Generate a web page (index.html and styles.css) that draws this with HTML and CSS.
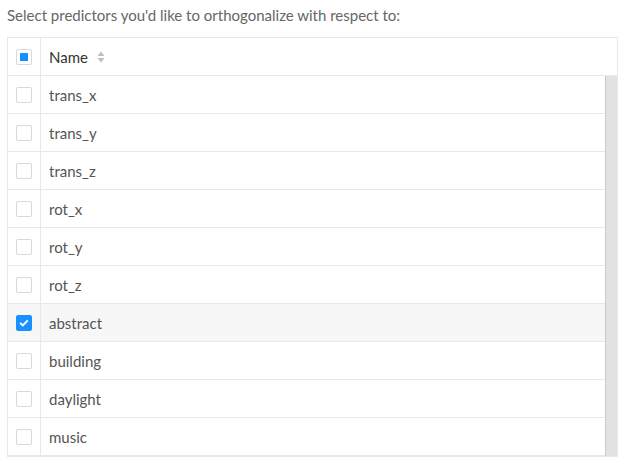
FILE: index.html
```html
<!DOCTYPE html>
<html>
<head>
<meta charset="utf-8">
<link rel="stylesheet" href="styles.css">
</head>
<body>
<p class="intro">Select predictors you'd like to orthogonalize with respect to:</p>
<div class="table">
  <div class="head">
    <div class="cell-check"><span class="cb indeterminate"></span></div>
    <div class="cell-name">Name
      <svg class="sorter" width="8" height="12" viewBox="0 0 8 12"><path d="M4 0.5 L7.5 5 L0.5 5 Z" fill="#bfbfbf"/><path d="M4 11.5 L7.5 7 L0.5 7 Z" fill="#bfbfbf"/></svg>
    </div>
  </div>
  <div class="body">
    <div class="rows">
      <div class="row"><div class="cell-check"><span class="cb"></span></div><div class="cell-name">trans_x</div></div>
      <div class="row"><div class="cell-check"><span class="cb"></span></div><div class="cell-name">trans_y</div></div>
      <div class="row"><div class="cell-check"><span class="cb"></span></div><div class="cell-name">trans_z</div></div>
      <div class="row"><div class="cell-check"><span class="cb"></span></div><div class="cell-name">rot_x</div></div>
      <div class="row"><div class="cell-check"><span class="cb"></span></div><div class="cell-name">rot_y</div></div>
      <div class="row"><div class="cell-check"><span class="cb"></span></div><div class="cell-name">rot_z</div></div>
      <div class="row selected"><div class="cell-check"><span class="cb checked"><svg width="10" height="8" viewBox="0 0 10 8"><path d="M1.2 4 L3.8 6.4 L8.8 1.4" fill="none" stroke="#fff" stroke-width="2"/></svg></span></div><div class="cell-name">abstract</div></div>
      <div class="row"><div class="cell-check"><span class="cb"></span></div><div class="cell-name">building</div></div>
      <div class="row"><div class="cell-check"><span class="cb"></span></div><div class="cell-name">daylight</div></div>
      <div class="row"><div class="cell-check"><span class="cb"></span></div><div class="cell-name">music</div></div>
    </div>
    <div class="scrollbar"></div>
  </div>
</div>
</body>
</html>
```
FILE: styles.css
```css
body {
  margin: 0;
  padding: 0 0 0 7px;
  font-family: "Source Sans Pro", "Lato", "Noto Sans", sans-serif;
  font-size: 15px;
  color: #555;
  background: #fff;
}
.intro {
  margin: 0;
  padding-top: 5px;
  height: 37px;
  box-sizing: border-box;
  line-height: 20px;
  color: #666;
}
.table {
  width: 611px;
  border-top: 1px solid #e8e8e8;
  border-left: 1px solid #e8e8e8;
  border-right: 1px solid #e8e8e8;
  box-sizing: border-box;
}
.head {
  display: flex;
  height: 38px;
  border-bottom: 1px solid #e8e8e8;
  box-sizing: border-box;
}
.cell-check {
  width: 32px;
  border-right: 1px solid #e8e8e8;
  display: flex;
  align-items: center;
  justify-content: center;
  flex: none;
}
.cell-name {
  flex: 1;
  display: flex;
  align-items: center;
  padding-left: 8px;
}
.head .cell-name {
  color: #333;
}
.sorter {
  margin-left: 9px;
  margin-top: 1px;
}
.cb {
  width: 16px;
  height: 16px;
  border: 1px solid #d9d9d9;
  border-radius: 2px;
  box-sizing: border-box;
  display: flex;
  align-items: center;
  justify-content: center;
  background: #fff;
}
.cb.indeterminate::after {
  content: "";
  width: 8px;
  height: 8px;
  background: #1890ff;
}
.cb.checked {
  background: #1890ff;
  border-color: #1890ff;
}
.body {
  display: flex;
  height: 381px;
  overflow: hidden;
  border-bottom: 1px solid #e8e8e8;
  box-sizing: border-box;
}
.rows {
  flex: 1;
}
.row {
  display: flex;
  height: 38px;
  border-bottom: 1px solid #e8e8e8;
  box-sizing: border-box;
}
.row.selected {
  background: #f7f7f7;
}
.scrollbar {
  width: 12px;
  flex: none;
  background: #e2e2e2;
  border-left: 1px solid #c9c9c9;
  box-sizing: border-box;
}
```
